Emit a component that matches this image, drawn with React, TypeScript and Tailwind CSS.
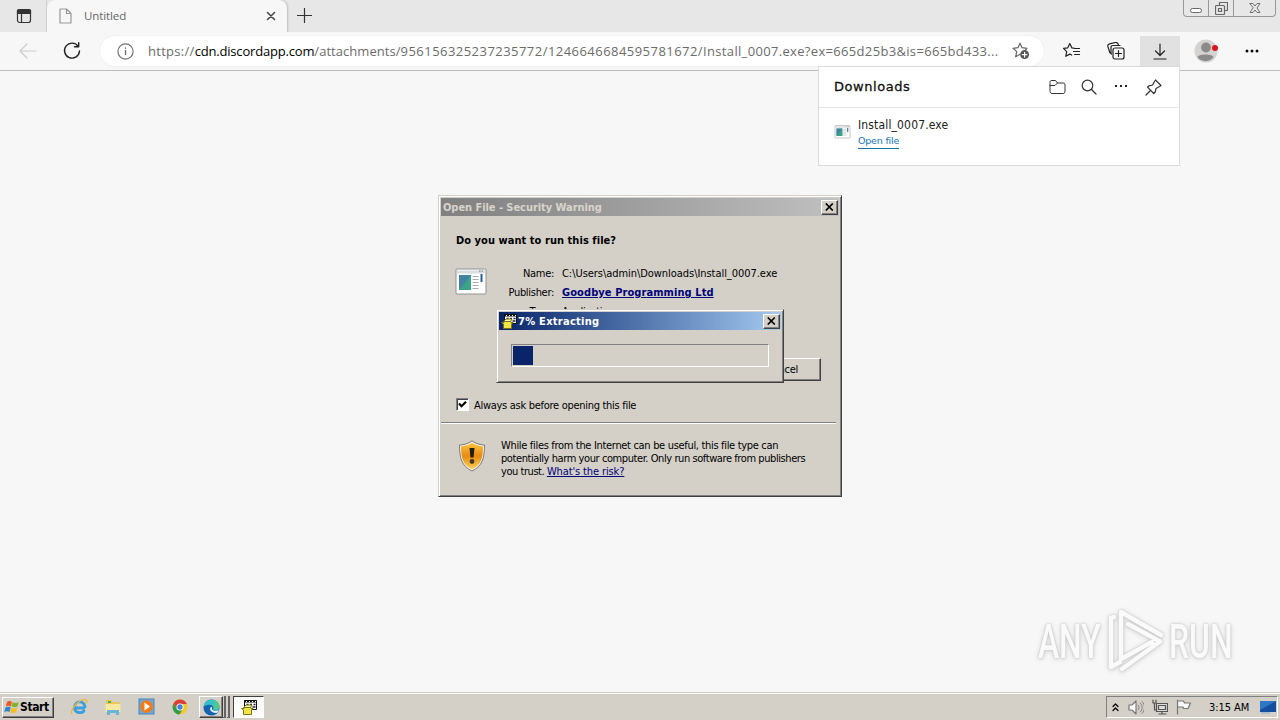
import type { ReactNode } from "react";
import clsx from "clsx";

const ui = "font-['Open_Sans','Noto_Sans',sans-serif]";
const tahoma = "font-['DejaVu_Sans_Condensed','DejaVu_Sans',sans-serif] [font-stretch:condensed]";
const raised = "border border-t-white border-l-white border-r-[#404040] border-b-[#404040] shadow-[inset_-1px_-1px_0_#808080]";

type IconProps = { className?: string; children: ReactNode; box?: string };

function Icon({ className, children, box = "0 0 20 20" }: IconProps) {
  return (
    <svg viewBox={box} className={clsx("shrink-0", className)} fill="none" stroke="currentColor" strokeWidth="1.2" strokeLinecap="round" strokeLinejoin="round">
      {children}
    </svg>
  );
}

function CloseButton() {
  return (
    <div className={clsx("flex h-[15px] w-[17px] shrink-0 items-center justify-center bg-[#d4d0c8] text-black", raised)}>
      <svg viewBox="0 0 9 8" className="h-2 w-[9px]" stroke="currentColor" strokeWidth="1.7">
        <path d="M.8.5l7 7M7.8.5l-7 7" />
      </svg>
    </div>
  );
}

function TabStrip() {
  return (
    <div className="flex h-8 bg-[#e7e7e7] text-[#333]">
      <div className="flex w-[47px] justify-center border-r border-[#d0d0d0] pt-2 pl-px">
        <Icon className="h-4 w-4" box="0 0 16 16">
          <rect x="1.5" y="1.5" width="13" height="13" rx="2.2" />
          <path d="M1.5 2h13v3.5h-13z" fill="currentColor" />
          <path d="M5.5 5v9" />
        </Icon>
      </div>
      <div className="flex w-60 items-start rounded-t-lg bg-[#f7f7f7] pt-2 pl-3 pr-[11px] shadow-[1px_0_2px_#bbb]">
        <Icon className="h-4 w-[13px] text-[#999]" box="0 0 13 16">
          <path d="M1 1h6.500l4.500 4.500V15H1zM7.500 1v4.500H12" />
        </Icon>
        <span className={clsx(ui, "ml-3 text-[11.500px] leading-[15px] tracking-[-0.1px] text-[#666]")}>Untitled</span>
        <Icon className="mt-[3px] ml-auto h-[10px] w-[10px] text-[#444]" box="0 0 10 10">
          <path d="M1.500 1.500l7 7M8.500 1.500l-7 7" strokeWidth="1.500" />
        </Icon>
      </div>
      <Icon className="mt-2 ml-[10px] h-[15px] w-[15px]" box="0 0 15 15">
        <path d="M7.500.5v14M.5 7.500h14" />
      </Icon>
      <div className="ml-auto mr-[4px] flex h-[17px] w-[93px] rounded-b border border-t-0 border-[#999] text-[#666]">
        <div className="flex w-[25px] justify-center border-r border-[#999] pt-[8px]">
          <div className="h-[5px] w-3 rounded-sm border border-[#666] bg-white" />
        </div>
        <div className="flex w-[25px] justify-center border-r border-[#999] pt-[2px]">
          <Icon className="h-[13px] w-[13px]" box="0 0 13 13">
            <path d="M4.500 3.500v-3h8v8h-3" />
            <rect x=".5" y="3.500" width="9" height="9" rx="1" />
            <rect x="3.500" y="6.500" width="3" height="3" />
          </Icon>
        </div>
        <div className="flex flex-1 justify-center pt-[3px]">
          <Icon className="h-[10px] w-3" box="0 0 12 10">
            <path d="M1 .5h3l2 2.500 2-2.500h3L8 5l3 4.500H8L6 7 4 9.500H1L4 5z" strokeWidth=".9" />
          </Icon>
        </div>
      </div>
    </div>
  );
}

function Toolbar() {
  return (
    <div className="flex h-[39px] items-center border-b border-[#bdbdbd] bg-[#f7f7f7] text-[#222]">
      <Icon className="ml-[19px] h-[18px] w-[18px] text-[#ccc]" box="0 0 18 18">
        <path d="M17 9H1.500M8 2L1 9l7 7" />
      </Icon>
      <Icon className="ml-[26px] h-[18px] w-[18px]" box="0 0 18 18">
        <path d="M15.300 4.500A7.500 7.500 0 1 0 16.500 9M11.500 4.800h4.200V.8" strokeWidth="1.400" />
      </Icon>
      <div className="ml-[18px] flex h-[32px] w-[946px] shrink-0 items-center rounded-full border border-[#f1f1f1] bg-white">
        <Icon className="ml-[17px] h-[17px] w-[17px] text-[#737373]" box="0 0 17 17">
          <circle cx="8.500" cy="8.500" r="7.600" />
          <path d="M8.500 7.500v4M8.500 5v.2" strokeWidth="1.400" />
        </Icon>
        <div className={clsx(ui, "ml-[14px] w-[854px] shrink-0 pt-px text-[13px] tracking-[0.285px] whitespace-nowrap text-[#6c6c6c]")}>
          https://
          <span className="tracking-[-0.18px] text-black">cdn.discordapp.com</span>
          <span className="tracking-[0.05px]">/attachments/</span>
          <span className="tracking-[0.46px]">956156325237235772/1246646684595781672/</span>
          <span className="tracking-[0.33px]">Install_0007.exe?ex=665d25b3&amp;is=665bd433...</span>
        </div>
        <Icon className="ml-[10px] h-[18px] w-[18px] text-[#666]" box="0 0 18 18">
          <path d="M8 1.200l2 4.500 5 .6-3 3M8 1.200L6 5.700l-5 .6 3.800 3.300-1.200 5.200L8 12.300" />
          <circle cx="12.600" cy="12.600" r="4.500" fill="#555" stroke="none" />
          <path d="M12.600 10.300v4.600M10.300 12.600h4.600" stroke="#fff" />
        </Icon>
      </div>
      <Icon className="ml-[18px] h-[18px] w-[18px]" box="0 0 18 18">
        <path d="M11 6.200l-2.200-.4L6.800 1.500l-2 4.300-4.300.6 3.200 3.200-.9 4.700 4-2.200 1.800 1M11.500 6.500h5M10.500 9.500h6M11.500 12.500h5" />
      </Icon>
      <Icon className="ml-[26px] h-[18px] w-[18px]" box="0 0 18 18">
        <rect x="6" y="6" width="11" height="11" rx="2" />
        <path d="M11.500 8.500v6M8.500 11.500h6M4.500 12L2.800 10.500.9 4.500C.5 3 1 2.200 2.500 1.800l6-1.300c1.500-.2 2.300.5 2.800 2M4 11V5.500C4 4 4.700 3.500 6 3.500h7" />
      </Icon>
      <div className="mt-1 ml-[15px] flex h-[30px] w-[40px] items-center justify-center self-start bg-[#e1e1e1]">
        <Icon className="h-[17px] w-[14px]" box="0 0 14 17">
          <path d="M7 1v11M2.500 8L7 12.500 11.500 8M1 16h12" />
        </Icon>
      </div>
      <svg viewBox="0 0 24 24" className="ml-[14px] h-6 w-6">
        <circle cx="12" cy="12" r="11.500" fill="#d5d3d1" />
        <circle cx="12" cy="8.500" r="4.900" fill="#8b8b8b" />
        <path d="M3.500 18c.5-3.500 15.500-3.500 16 0-3 5.500-13 5.500-16 0z" fill="#8b8b8b" />
        <circle cx="21" cy="9" r="3" fill="#e01020" />
      </svg>
      <div className="ml-[28px] flex gap-[3px]">
        <i className="h-[2px] w-[2px] rounded-full bg-black ring-[0.5px]" />
        <i className="h-[2px] w-[2px] rounded-full bg-black ring-[0.5px]" />
        <i className="h-[2px] w-[2px] rounded-full bg-black ring-[0.5px]" />
      </div>
    </div>
  );
}

function AppFileIcon({ className }: { className: string }) {
  return (
    <svg viewBox="0 0 32 28" className={clsx("shrink-0", className)}>
      <rect x="1" y="1" width="30" height="25" rx="1" fill="#fff" stroke="#8e9296" />
      <path d="M2 4h28" stroke="#d8dde0" strokeWidth="3" />
      <path d="M24 3h1.500M26.500 3H28" stroke="#777" />
      <rect x="4" y="7" width="12" height="15" fill="#3aa287" />
      <path d="M4 7h12L4 22z" fill="#4777a9" opacity=".75" />
      <path d="M17.500 8.500h6M17.500 11.500h6M17.500 14.500h6M17.500 17.500h6M17.500 20.500h6" stroke="#a9adb0" />
      <rect x="25.500" y="6" width="2" height="8" fill="#305a9a" />
    </svg>
  );
}

function DownloadsFlyout() {
  return (
    <div className="absolute top-[66px] left-[818px] h-[100px] w-[362px] border border-[#dadada] bg-white text-[#333]">
      <div className="flex h-[41px] items-center border-b border-[#e4e4e4] pl-[15px]">
        <span className="w-[214px] font-['DejaVu_Sans',sans-serif] text-[13px] tracking-[0.55px] text-[#111] [-webkit-text-stroke:0.3px]">Downloads</span>
        <Icon className="ml-px h-4 w-[17px]" box="0 0 17 16">
          <path d="M1 4V3.500C1 2 1.500 1.500 3 1.500h3.500L8.500 4H14c1.500 0 2 .7 2 2v6c0 1.500-.7 2.500-2 2.500H3c-1.300 0-2-1-2-2.500zM1 6.500h5L8.500 4" strokeWidth="1" />
        </Icon>
        <Icon className="ml-[15px] h-4 w-4" box="0 0 16 16">
          <circle cx="6.500" cy="6.500" r="5.300" />
          <path d="M10.500 10.500l4.500 4.500" />
        </Icon>
        <div className="mt-[-2px] ml-[18px] flex gap-[3px]">
          <i className="h-[2px] w-[2px] bg-[#222]" />
          <i className="h-[2px] w-[2px] bg-[#222]" />
          <i className="h-[2px] w-[2px] bg-[#222]" />
        </div>
        <Icon className="ml-[18px] h-[17px] w-[17px]" box="0 0 17 17">
          <path d="M10.500 1l5.500 5.500-1.500 1-3.500 2-.8 3.500-1.400 1.500L2.500 8.200 4 6.800l3.500-.8 2-3.500zM5.500 11.500L1 16" />
        </Icon>
      </div>
      <div className="flex pt-[9px] pl-[15px]">
        <AppFileIcon className="mt-2 h-[14px] w-[17px]" />
        <div className="ml-[7px] flex flex-col items-start">
          <span className={clsx(tahoma, "text-[12px] leading-4 tracking-[0.15px] text-[#222]")}>Install_0007.exe</span>
          <span className="border-b border-[#1673a9] font-['DejaVu_Sans',sans-serif] text-[9.500px] leading-[15px] tracking-[-0.2px] text-[#1673b9]">Open file</span>
        </div>
      </div>
    </div>
  );
}

function SecurityWarning() {
  return (
    <div className={clsx(tahoma, "absolute top-[195px] left-[438px] h-[302px] w-[404px] border border-t-[#d4d0c8] border-l-[#d4d0c8] border-r-[#404040] border-b-[#404040] bg-[#d4d0c8] p-[2px] text-[11px] text-black shadow-[inset_1px_1px_0_#fff,inset_-1px_-1px_0_#808080]")}>
      <div className="flex h-[18px] w-[398px] items-center bg-linear-to-r from-[#808080] to-[#c0c0c0] pr-px pl-[2px] text-[#d8d4cc]">
        <span className="mt-[2px] mr-auto font-bold tracking-[-0.05px]">Open File - Security Warning</span>
        <CloseButton />
      </div>
      <p className="mt-[18px] ml-[15px] leading-[14px] font-bold tracking-[0.05px]">Do you want to run this file?</p>
      <div className="mt-[18px] flex pl-[14px]">
        <AppFileIcon className="mt-[2px] h-7 w-8" />
        <div className="grid h-[58px] grid-cols-[67px_auto] content-start gap-x-[8px] pt-px leading-[14px] tracking-[-0.3px] whitespace-nowrap">
          <span className="h-[19px] text-right">Name:</span>
          <span className="tracking-[-0.05px]">C:\Users\admin\Downloads\Install_0007.exe</span>
          <span className="h-[19px] text-right">Publisher:</span>
          <span className="font-bold tracking-[0.08px] text-[#00007b] underline">Goodbye Programming Ltd</span>
          <span className="text-right">Type:</span>
          <span>Application</span>
        </div>
      </div>
      <div className={clsx("mt-[34px] ml-[305px] flex h-[23px] w-[75px] items-center justify-center pt-px pr-[3px] tracking-[-0.2px]", raised)}>Cancel</div>
      <div className="mt-[17px] ml-[15px] flex h-[13px] items-center">
        <div className="flex h-[13px] w-[13px] items-center justify-center border border-t-[#808080] border-l-[#808080] border-r-white border-b-white bg-white shadow-[inset_1px_1px_0_#404040]">
          <svg viewBox="0 0 9 9" className="h-[9px] w-[9px]" fill="none" stroke="#000" strokeWidth="2.200">
            <path d="M1 3.500l2.500 2.700L8 1.700" />
          </svg>
        </div>
        <span className="mt-[3px] ml-[5px] tracking-[-0.29px]">Always ask before opening this file</span>
      </div>
      <div className="mt-[11px] w-[395px] border-t border-b border-t-[#808080] border-b-white" />
      <div className="flex pt-[15px] pl-[17px]">
        <svg viewBox="0 0 28 32" className="mt-[1px] h-8 w-7">
          <defs>
            <linearGradient id="shield" x2="0" y2="1">
              <stop stopColor="#ffc440" />
              <stop offset=".5" stopColor="#e98a10" />
              <stop offset="1" stopColor="#ffd257" />
            </linearGradient>
          </defs>
          <path d="M14 .8c4 3 8 4 12.500 4.200 0 13-2 21-12.500 26C3.500 26 1.500 18 1.500 5 6 4.800 10 3.800 14 .8z" fill="#f3f1e8" stroke="#7c7c78" />
          <path d="M14 2.800c3 2 7 3.500 11 3.700 0 12-2 18-11 22.800C5 24.500 3 18.500 3 6.500c4-.2 8-1.700 11-3.700z" fill="url(#shield)" />
          <path d="M11.500 8h5l-1 9.500h-3z" fill="#221d16" />
          <circle cx="14" cy="21.500" r="2.400" fill="#423b2d" />
        </svg>
        <p className="ml-[15px] leading-[13px] whitespace-nowrap">
          <span className="tracking-[-0.32px]">While files from the Internet can be useful, this file type can</span>
          <br />
          <span className="tracking-[-0.42px]">potentially harm your computer. Only run software from publishers</span>
          <br />
          <span className="tracking-[-0.45px]">you trust. </span>
          <span className="tracking-[-0.12px] text-[#00007b] underline">What's the risk?</span>
        </p>
      </div>
    </div>
  );
}

function BoxIcon() {
  return (
    <svg viewBox="0 0 16 16" className="h-4 w-4 shrink-0">
      <path d="M3.500 1.500h12v9h-12z" fill="#fff" stroke="#111" />
      <path d="M3 2.500h13" stroke="#111" strokeWidth="2" />
      <path d="M5 2.500h1M8 2.500h1M11 2.500h1M14 2.500h1" stroke="#fff" />
      <path d="M5.500 5.500h2M9 5.500h2M12.500 5.500h2M11.500 8h3" stroke="#223" strokeWidth="1.300" />
      <path d="M2.500 8.500L5 6h6L9.500 8.500" fill="#fff9a0" stroke="#77731a" />
      <path d="M.5 9.500H3V8.500h7v1h2L10.500 11v4.500h-8V11z" fill="#f1e642" stroke="#78701b" />
    </svg>
  );
}

function ExtractingDialog() {
  return (
    <div className={clsx(tahoma, "absolute top-[309px] left-[496px] h-[74px] w-[288px] border border-t-[#d4d0c8] border-l-[#d4d0c8] border-r-[#404040] border-b-[#404040] bg-[#d4d0c8] p-[2px] text-[11px] shadow-[inset_1px_1px_0_#fff,inset_-1px_-1px_0_#808080]")}>
      <div className="flex h-[18px] items-center bg-linear-to-r from-[#0a246a] to-[#a6caf0] pr-px pl-[2px] font-bold text-white">
        <BoxIcon />
        <span className="mt-[2px] mr-auto ml-px tracking-[0.28px]">7% Extracting</span>
        <CloseButton />
      </div>
      <div className="mt-[14px] ml-3 h-[23px] w-[258px] border border-t-[#808080] border-l-[#808080] border-r-white border-b-white p-px">
        <div className="h-[19px] w-5 bg-[#0a246a]" />
      </div>
    </div>
  );
}

function Watermark() {
  return (
    <div className="absolute top-[607px] left-[1038px] flex h-[68px] items-center font-['Roboto',sans-serif] text-[49px] leading-none font-medium text-[#fafafa] [filter:drop-shadow(0_0_1px_#c2c2c2)_drop-shadow(0_1px_2px_#d4d4d4)]">
      <span className="w-[68px] origin-left scale-x-[0.65]">ANY</span>
      <svg viewBox="0 0 60 68" className="h-[68px] w-[60px]" fill="none" stroke="#fafafa" strokeWidth="4.500" strokeLinejoin="round" strokeLinecap="round">
        <path d="M15 51V5l40 23M22 17l32 17.500L16 62M15 52L46 35M5 11v49l9-5M5 11l3-1" />
      </svg>
      <span className="ml-[3px] w-[68px] origin-left scale-x-[0.65]">RUN</span>
    </div>
  );
}

function Taskbar() {
  return (
    <div className={clsx(tahoma, "flex h-[28px] items-center border-t-[#d4d0c8] bg-[#d4d0c8] pt-[2px] pl-[2px] text-[11px] shadow-[inset_0_1px_0_#d4d0c8,inset_0_2px_0_#fff]")}>
      <div className={clsx("flex h-[21px] w-[52px] items-center pl-[1px] font-bold", raised)}>
        <svg viewBox="0 0 16 16" className="h-4 w-4 shrink-0">
          <path d="M3 3c2-1.500 3.500-1 5 0L6.800 7.500C5 6.500 3.500 6.500 1.800 7.500z" fill="#ec5a25" />
          <path d="M8.800 3.300c2 1 4 1 6-.2l-1.300 4.500c-2 1-4 1-5.900 0z" fill="#7ab52e" />
          <path d="M1.500 8.500c2-1 3.500-1 5.200 0l-1.300 4.500c-1.700-1-3.400-1-5.200 0z" fill="#2f83d0" />
          <path d="M7.500 8.800c2 1 4 1 6 0L12 13.300c-2 1-3.800 1-5.700 0z" fill="#f8bd20" />
        </svg>
        <span className="text-[12px] tracking-[-0.4px]">Start</span>
      </div>
      <svg viewBox="0 0 18 18" className="ml-[16px] h-[18px] w-[18px]" fill="none">
        <path d="M15 10H5.500M15 10c0-9-10.500-7-10.500-.5 0 6 8 6.500 10 2.500" stroke="#3aa0df" strokeWidth="2.800" />
        <path d="M2 16C-1 11 12-1 16.500 2c1 1 0 3-1 4" stroke="#edb93b" strokeWidth="1.300" />
      </svg>
      <svg viewBox="0 0 18 18" className="ml-[16px] h-[18px] w-[18px]">
        <path d="M2 2h6l1 2h7v11H2z" fill="#e9c85c" />
        <path d="M1.500 6h15v8h-15z" fill="#f8e9a1" />
        <path d="M3 17v-5h12v5h-3v-2H6v2z" fill="#6db4dc" />
        <path d="M4 4h3" stroke="#53a856" strokeWidth="2" />
      </svg>
      <svg viewBox="0 0 18 18" className="ml-[16px] h-[18px] w-[18px]">
        <rect x="1" y="1" width="15" height="15" fill="#70a8d8" stroke="#4b86ba" />
        <circle cx="8.500" cy="8.500" r="6.300" fill="#f37b16" />
        <path d="M6.500 4.500L12 8.500l-5.500 4z" fill="#fff" />
      </svg>
      <svg viewBox="0 0 18 18" className="ml-[16px] h-4 w-4">
        <circle cx="9" cy="9" r="8.500" fill="#f5c928" />
        <path d="M1.600 5A8.500 8.500 0 0 1 16.700 5.500H9L5.500 11z" fill="#dc4034" />
        <path d="M1.600 5A8.500 8.500 0 0 0 8.500 17.500l4-7L9 13l-3.500-2z" fill="#2f9c4c" />
        <circle cx="9" cy="9" r="4" fill="#fff" />
        <circle cx="9" cy="9" r="3" fill="#4182e0" />
      </svg>
      <div className={clsx("ml-[11px] flex h-[22px] w-[24px] items-center justify-center", raised)}>
        <svg viewBox="0 0 18 18" className="h-[17px] w-[17px]">
          <circle cx="9" cy="9" r="8.500" fill="#1463ac" />
          <path d="M.7 8C1-1 16-2 17.500 8c.3 4-4 5-7 3.500C13 7 7 4 .7 8z" fill="#36c0c9" />
          <path d="M11 1c4 0 7 4 6.500 7-.5 3-4 3.500-7 2.500C14 8 13 3 11 1z" fill="#58c884" />
          <path d="M10 8.500c-1.500 1.500 0 4 3 4 1.500 0 3-.3 4-1-.5 1.200-1 2-2 3-4 1-8-2-7.500-4.500.2-1 1.200-1.500 2.500-1.500z" fill="#e4f3f5" />
        </svg>
      </div>
      <div className="flex h-[22px] gap-[1px]">
        <div className="w-[3px] border-r-2 border-b border-[#666]" />
        <div className="w-[3px] border-r-2 border-b border-[#666]" />
      </div>
      <div className="ml-[3px] flex h-[22px] w-[31px] items-center justify-center border border-t-[#404040] border-l-[#404040] border-r-white border-b-white bg-[#fcfcfb]">
        <BoxIcon />
      </div>
      <div className="mr-[2px] ml-auto flex h-[22px] w-[172px] items-center border border-t-[#808080] border-l-[#808080] border-r-white border-b-white">
        <Icon className="ml-[5px] h-[9px] w-[7px] text-black" box="0 0 7 9">
          <path d="M1 3.500L3.500 1 6 3.500M1 7.500L3.500 5 6 7.500" />
        </Icon>
        <Icon className="ml-[9px] h-[15px] w-4 text-[#777]" box="0 0 16 15">
          <path d="M1 5h3l4-4v13l-4-4H1z" fill="#fff" />
          <path d="M10 5c1.500 1 1.500 4 0 5M12 3c3 2 3 7 0 9M14 1.500c3.500 3 3.500 9 0 12" strokeWidth=".9" />
        </Icon>
        <Icon className="ml-[8px] h-4 w-4 text-[#555]" box="0 0 16 16">
          <rect x="4.500" y="4.500" width="11" height="8" fill="#ddd" />
          <path d="M1 1v3h3V1M2.500 4v7h2M7 15h7M10 13v2M6.500 6.500h7v4h-7z" />
        </Icon>
        <Icon className="ml-[8px] h-4 w-4 text-[#777]" box="0 0 16 16">
          <path d="M1.500 15V1M1.500 2h6l1 2h6L12 9.500H7.500L7 8H1.500" fill="#f8f8f8" />
        </Icon>
        <span className="mt-[2px] ml-[17px] w-[42px] tracking-[-0.05px] whitespace-nowrap">3:15 AM</span>
        <svg viewBox="0 0 16 14" className="ml-[9px] h-[14px] w-4">
          <path d="M0 1h16v11H0z" fill="#144f9f" />
          <path d="M0 1h16L0 10z" fill="#2e78c5" />
          <path d="M1 13h9" stroke="#86a9cc" />
        </svg>
      </div>
    </div>
  );
}

export default function App() {
  return (
    <div className="relative flex h-[720px] w-[1280px] flex-col overflow-hidden bg-[#f7f7f7]">
      <TabStrip />
      <Toolbar />
      <main className="flex-1" />
      <Taskbar />
      <DownloadsFlyout />
      <SecurityWarning />
      <ExtractingDialog />
      <Watermark />
    </div>
  );
}
